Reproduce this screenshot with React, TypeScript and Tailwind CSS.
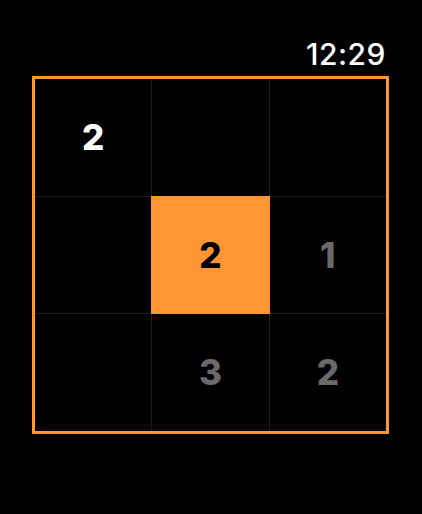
import React from "react";

type Cell = { v?: string; kind?: "white" | "gray" | "active" };

const cells: Cell[] = [
  { v: "2", kind: "white" },
  {},
  {},
  {},
  { v: "2", kind: "active" },
  { v: "1", kind: "gray" },
  {},
  { v: "3", kind: "gray" },
  { v: "2", kind: "gray" },
];

export default function App() {
  return (
    <div
      className="w-[422px] h-[514px] bg-black flex flex-col"
      style={{ fontFamily: "Inter, 'Noto Sans', sans-serif" }}
    >
      <div className="h-[76px] flex justify-end pr-[36px] pt-[37px]">
        <span className="text-white text-[30px] leading-[34px] font-medium tracking-[0.5px]">12:29</span>
      </div>
      <div className="ml-[32px] w-[357px] h-[358px] border-[3px] border-[#ff9533] bg-black">
        <div className="grid grid-cols-3 grid-rows-3 w-full h-full gap-px bg-[#1e1e1e]">
          {cells.map((c, i) => (
            <div
              key={i}
              className={
                "flex items-center justify-center text-[35px] font-extrabold " +
                (c.kind === "active"
                  ? "bg-[#ff9533] text-black -m-px"
                  : c.kind === "white"
                  ? "bg-black text-white"
                  : "bg-black text-[#6a6a6a]")
              }
            >
              {c.v}
            </div>
          ))}
        </div>
      </div>
    </div>
  );
}
